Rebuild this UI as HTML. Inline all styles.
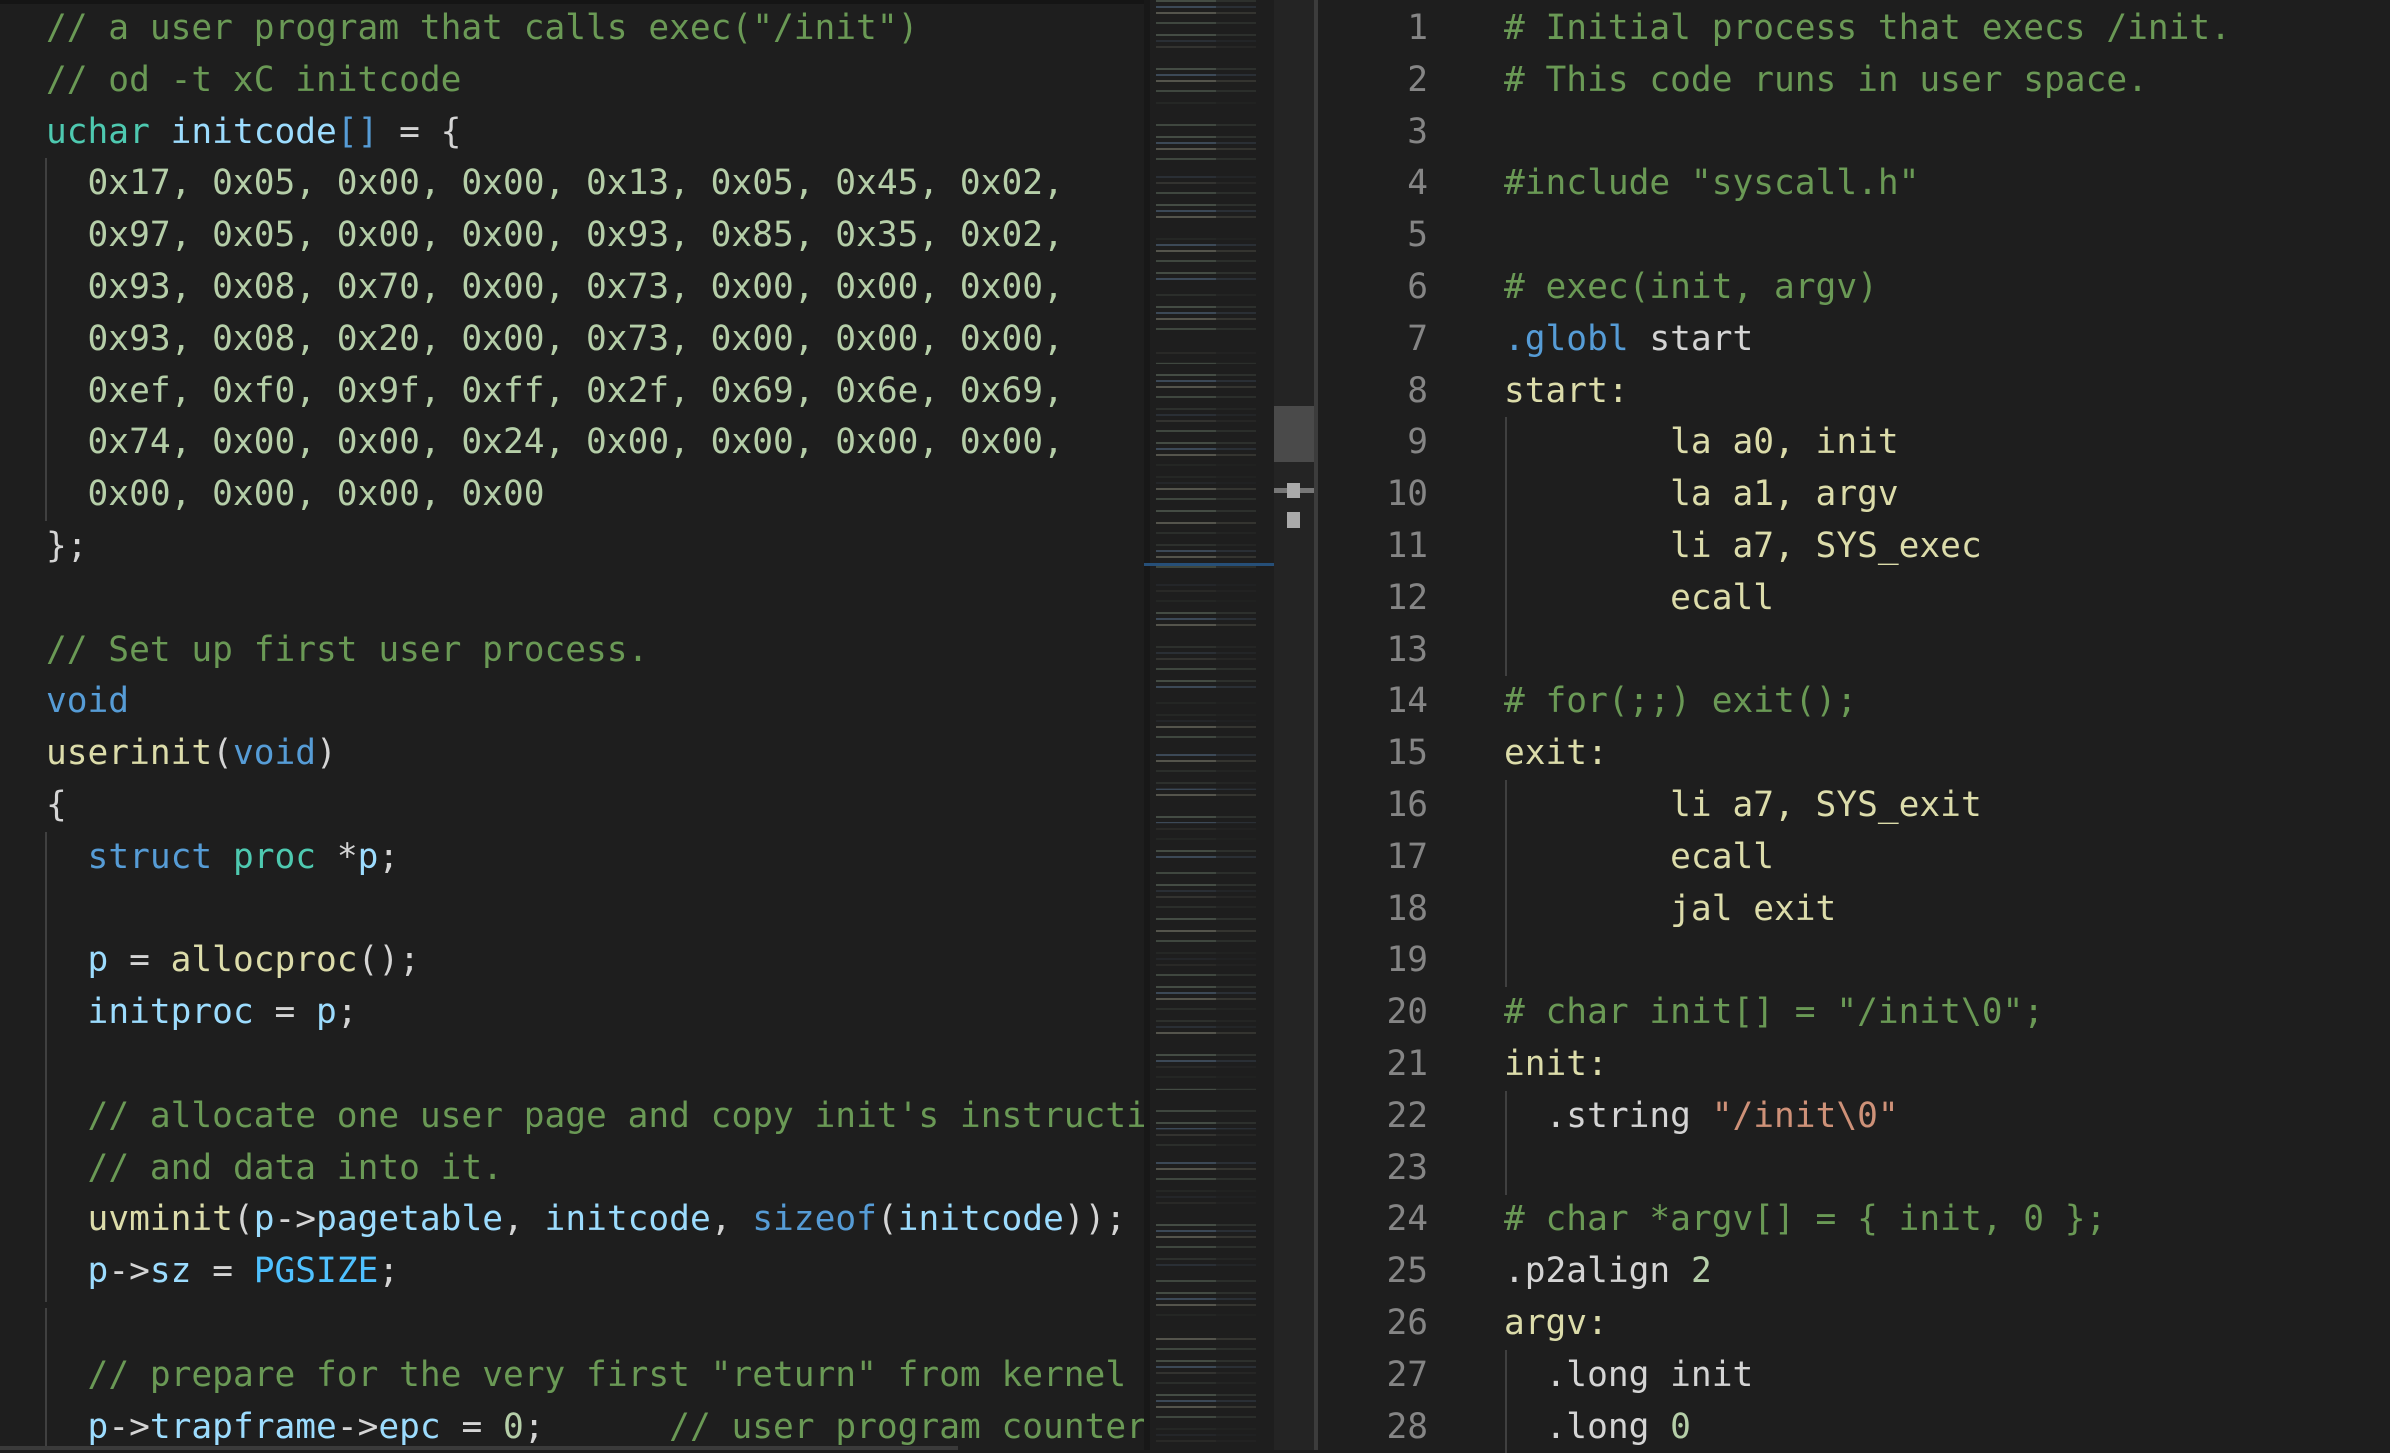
<!DOCTYPE html>
<html><head><meta charset="utf-8"><style>
html,body{margin:0;padding:0;background:#1e1e1e;width:2390px;height:1450px;overflow:hidden}
.pane{position:absolute;top:0;height:1450px;overflow:hidden;font-family:"DejaVu Sans Mono","Liberation Mono",monospace;font-size:34.5px;color:#d4d4d4}
.ln{position:absolute;left:0;height:51.8px;line-height:51.8px;white-space:pre}
.c{color:#6a9955}.n{color:#b5cea8}.k{color:#569cd6}.t{color:#4ec9b0}.v{color:#9cdcfe}.f{color:#dcdcaa}.s{color:#ce9178}.b{color:#569cd6}.C{color:#4fc1ff}
.g{position:absolute;width:2px;background:#404040}
.num{position:absolute;left:1320px;width:108px;text-align:right;color:#858585;height:51.8px;line-height:51.8px;font-family:"DejaVu Sans Mono",monospace;font-size:34.5px}
.mm{position:absolute;left:1144px;top:0;width:130px;height:1450px;background:#1e1e1e}
.mm i{position:absolute;height:3px;display:block}
</style></head><body>
<div class="pane" style="left:0;width:1146px;background:#1e1e1e">
<div style="position:absolute;left:0;top:0;width:1146px;height:4px;background:#151515"></div>
<div class="g" style="left:45px;top:158px;height:363px"></div>
<div class="g" style="left:45px;top:832px;height:470px"></div>
<div class="g" style="left:45px;top:1308px;height:145px"></div>
<div style="position:absolute;left:46px;top:3px">
<div class="ln" style="top:0"><span class="c">// a user program that calls exec("/init")</span></div>
<div class="ln" style="top:51.8px"><span class="c">// od -t xC initcode</span></div>
<div class="ln" style="top:103.6px"><span class="t">uchar</span> <span class="v">initcode</span><span class="b">[]</span> = {</div>
<div class="ln n" style="top:155.4px">  0x17, 0x05, 0x00, 0x00, 0x13, 0x05, 0x45, 0x02,</div>
<div class="ln n" style="top:207.2px">  0x97, 0x05, 0x00, 0x00, 0x93, 0x85, 0x35, 0x02,</div>
<div class="ln n" style="top:259px">  0x93, 0x08, 0x70, 0x00, 0x73, 0x00, 0x00, 0x00,</div>
<div class="ln n" style="top:310.8px">  0x93, 0x08, 0x20, 0x00, 0x73, 0x00, 0x00, 0x00,</div>
<div class="ln n" style="top:362.6px">  0xef, 0xf0, 0x9f, 0xff, 0x2f, 0x69, 0x6e, 0x69,</div>
<div class="ln n" style="top:414.4px">  0x74, 0x00, 0x00, 0x24, 0x00, 0x00, 0x00, 0x00,</div>
<div class="ln n" style="top:466.2px">  0x00, 0x00, 0x00, 0x00</div>
<div class="ln" style="top:518px">};</div>
<div class="ln" style="top:621.6px"><span class="c">// Set up first user process.</span></div>
<div class="ln" style="top:673.4px"><span class="k">void</span></div>
<div class="ln" style="top:725.2px"><span class="f">userinit</span>(<span class="k">void</span>)</div>
<div class="ln" style="top:777px">{</div>
<div class="ln" style="top:828.8px">  <span class="k">struct</span> <span class="t">proc</span> *<span class="v">p</span>;</div>
<div class="ln" style="top:932.4px">  <span class="v">p</span> = <span class="f">allocproc</span>();</div>
<div class="ln" style="top:984.2px">  <span class="v">initproc</span> = <span class="v">p</span>;</div>
<div class="ln" style="top:1087.8px">  <span class="c">// allocate one user page and copy init's instructions to it</span></div>
<div class="ln" style="top:1139.6px">  <span class="c">// and data into it.</span></div>
<div class="ln" style="top:1191.4px">  <span class="f">uvminit</span>(<span class="v">p</span>-&gt;<span class="v">pagetable</span>, <span class="v">initcode</span>, <span class="k">sizeof</span>(<span class="v">initcode</span>));</div>
<div class="ln" style="top:1243.2px">  <span class="v">p</span>-&gt;<span class="v">sz</span> = <span class="C">PGSIZE</span>;</div>
<div class="ln" style="top:1346.8px">  <span class="c">// prepare for the very first "return" from kernel to user.</span></div>
<div class="ln" style="top:1398.6px">  <span class="v">p</span>-&gt;<span class="v">trapframe</span>-&gt;<span class="v">epc</span> = <span class="n">0</span>;      <span class="c">// user program counter</span></div>
</div>
<div style="position:absolute;left:0;top:1446px;width:958px;height:4px;background:#3a3a3a"></div>
</div>
<div class="mm">
<div style="position:absolute;left:0;top:0;width:6px;height:1450px;background:#181818"></div>
<div style="position:absolute;left:12px;top:0;width:100px;height:1450px;opacity:.5;
background-image:repeating-linear-gradient(180deg,#6a7a6a 0 2px,transparent 2px 6px,#5a7590 6px 8px,transparent 8px 12px,#8a8a7a 12px 14px,transparent 14px 22px,#607060 22px 24px,transparent 24px 34px);
-webkit-mask-image:repeating-linear-gradient(180deg,#000 0 40px,rgba(0,0,0,.4) 40px 63px,#000 63px 97px,rgba(0,0,0,.2) 97px 121px);"></div>
<div style="position:absolute;left:12px;top:0;width:100px;height:1450px;background:
repeating-linear-gradient(180deg,transparent 0 50px,#1e1e1e 50px 58px),
repeating-linear-gradient(90deg,transparent 0 60px,rgba(30,30,30,.6) 60px 100px);"></div>
<div style="position:absolute;left:0;top:563px;width:130px;height:3px;background:#264f78"></div>
</div>
<div style="position:absolute;left:1274px;top:0;width:40px;height:1450px;background:#242424"></div>
<div style="position:absolute;left:1274px;top:406px;width:40px;height:56px;background:#4a4a4a"></div>
<div style="position:absolute;left:1274px;top:488px;width:40px;height:5px;background:#777"></div>
<div style="position:absolute;left:1287px;top:483px;width:13px;height:15px;background:#aaa"></div>
<div style="position:absolute;left:1287px;top:512px;width:13px;height:16px;background:#aaa"></div>
<div style="position:absolute;left:1314px;top:0;width:4px;height:1450px;background:#3c3c3c"></div>
<div class="pane" style="left:1318px;width:1072px;background:#1e1e1e"></div>
<div class="pane" style="left:0;width:2390px;background:transparent;top:3px">
<div class="num" style="top:0">1</div><div class="num" style="top:51.8px">2</div><div class="num" style="top:103.6px">3</div><div class="num" style="top:155.4px">4</div><div class="num" style="top:207.2px">5</div><div class="num" style="top:259px">6</div><div class="num" style="top:310.8px">7</div><div class="num" style="top:362.6px">8</div><div class="num" style="top:414.4px">9</div><div class="num" style="top:466.2px">10</div><div class="num" style="top:518px">11</div><div class="num" style="top:569.8px">12</div><div class="num" style="top:621.6px">13</div><div class="num" style="top:673.4px">14</div><div class="num" style="top:725.2px">15</div><div class="num" style="top:777px">16</div><div class="num" style="top:828.8px">17</div><div class="num" style="top:880.6px">18</div><div class="num" style="top:932.4px">19</div><div class="num" style="top:984.2px">20</div><div class="num" style="top:1036px">21</div><div class="num" style="top:1087.8px">22</div><div class="num" style="top:1139.6px">23</div><div class="num" style="top:1191.4px">24</div><div class="num" style="top:1243.2px">25</div><div class="num" style="top:1295px">26</div><div class="num" style="top:1346.8px">27</div><div class="num" style="top:1398.6px">28</div>
<div class="g" style="left:1505px;top:414px;height:259px"></div>
<div class="g" style="left:1505px;top:777px;height:207px"></div>
<div class="g" style="left:1505px;top:1088px;height:104px"></div>
<div class="g" style="left:1505px;top:1347px;height:103px"></div>
<div style="position:absolute;left:1504px;top:0">
<div class="ln c" style="top:0"># Initial process that execs /init.</div>
<div class="ln c" style="top:51.8px"># This code runs in user space.</div>
<div class="ln c" style="top:155.4px">#include "syscall.h"</div>
<div class="ln c" style="top:259px"># exec(init, argv)</div>
<div class="ln" style="top:310.8px"><span class="k">.globl</span> start</div>
<div class="ln f" style="top:362.6px">start:</div>
<div class="ln f" style="top:414.4px">        la a0, init</div>
<div class="ln f" style="top:466.2px">        la a1, argv</div>
<div class="ln f" style="top:518px">        li a7, SYS_exec</div>
<div class="ln f" style="top:569.8px">        ecall</div>
<div class="ln c" style="top:673.4px"># for(;;) exit();</div>
<div class="ln f" style="top:725.2px">exit:</div>
<div class="ln f" style="top:777px">        li a7, SYS_exit</div>
<div class="ln f" style="top:828.8px">        ecall</div>
<div class="ln f" style="top:880.6px">        jal exit</div>
<div class="ln c" style="top:984.2px"># char init[] = "/init\0";</div>
<div class="ln f" style="top:1036px">init:</div>
<div class="ln" style="top:1087.8px">  .string <span class="s">"/init\0"</span></div>
<div class="ln c" style="top:1191.4px"># char *argv[] = { init, 0 };</div>
<div class="ln" style="top:1243.2px">.p2align <span class="n">2</span></div>
<div class="ln f" style="top:1295px">argv:</div>
<div class="ln" style="top:1346.8px">  .long init</div>
<div class="ln" style="top:1398.6px">  .long <span class="n">0</span></div>
</div>
</div>
</body></html>
